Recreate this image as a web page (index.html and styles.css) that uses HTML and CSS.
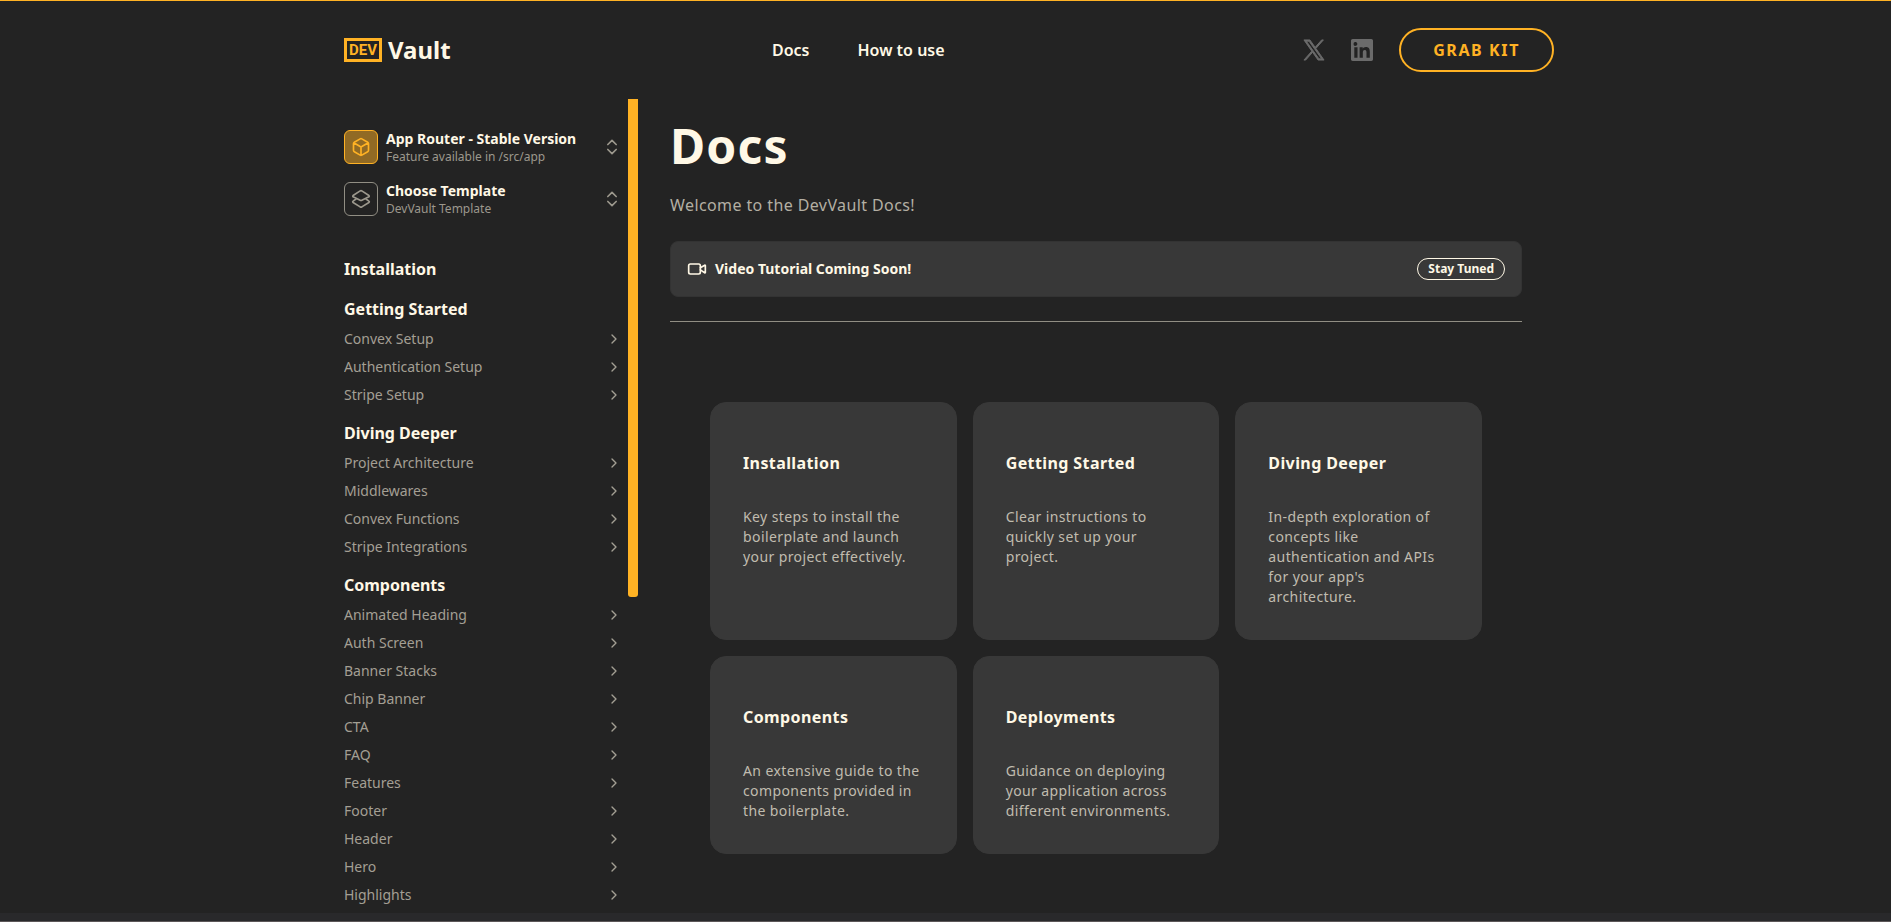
FILE: index.html
```html
<!DOCTYPE html>
<html lang="en">

<head>
  <meta charset="UTF-8" />
  <meta name="viewport" content="width=device-width, initial-scale=1.0" />
  <title>Docs | DevVault</title>
  <link rel="stylesheet" href="styles.css">
</head>

<body>
  <!-- Shared icons -->
  <svg class="sprite" aria-hidden="true">
    <symbol id="chevron-right" viewBox="0 0 24 24">
      <path d="m9 18 6-6-6-6" />
    </symbol>
    <symbol id="chevrons-up-down" viewBox="0 0 24 24">
      <path d="m7 15 5 5 5-5M7 9l5-5 5 5" />
    </symbol>
  </svg>

  <header class="header container">
    <a class="logo" href="#">
      <span class="logo-box">DEV</span>
      <span class="logo-name">Vault</span>
    </a>

    <nav class="nav">
      <a class="nav-link" href="#">Docs</a>
      <a class="nav-link" href="#">How to use</a>
    </nav>

    <div class="header-actions">
      <a class="social" href="#" aria-label="X">
        <svg class="social-icon" viewBox="0 0 24 24">
          <path d="M14.095 10.316 22.286 1h-1.94L13.23 9.088 7.551 1H1l8.59 12.231L1 23h1.94l7.51-8.543L16.45 23H23l-8.905-12.684ZM11.436 13.338l-.872-1.219L3.64 2.432h2.98l5.592 7.821.869 1.219 7.265 10.166h-2.982l-5.928-8.3Z" stroke="currentColor" stroke-width="1" />
        </svg>
      </a>
      <a class="social" href="#" aria-label="LinkedIn">
        <svg class="social-icon" viewBox="0 0 24 24">
          <path fill-rule="evenodd" d="M22.2 0H1.8C.8 0 0 .8 0 1.700v20.500C0 23.200.8 24 1.800 24h20.400c1 0 1.800-.8 1.800-1.800V1.700C24 .8 23.200 0 22.200 0ZM7.100 20.400H3.600V9h3.500v11.400ZM5.300 7.400a2.100 2.100 0 1 1 0-4.100 2.100 2.100 0 0 1 0 4.100ZM20.500 20.400h-3.600v-5.500c0-1.400 0-3-1.800-3-1.900 0-2.200 1.400-2.200 2.900v5.600H9.400V9h3.400v1.600c.5-.9 1.600-1.900 3.400-1.900 3.600 0 4.300 2.400 4.300 5.500v6.200Z" />
        </svg>
      </a>
      <button class="grab-button">GRAB KIT</button>
    </div>
  </header>

  <div class="layout container">
    <aside class="sidebar">
      <div class="sidebar-content">
        <div class="switchers">
          <button class="switcher">
            <span class="switcher-icon switcher-icon-active">
              <svg class="icon-20" viewBox="0 0 24 24">
                <path d="M21 8a2 2 0 0 0-1-1.730l-7-4a2 2 0 0 0-2 0l-7 4A2 2 0 0 0 3 8v8a2 2 0 0 0 1 1.730l7 4a2 2 0 0 0 2 0l7-4A2 2 0 0 0 21 16ZM3.300 7l8.700 5 8.700-5M12 22V12" />
              </svg>
            </span>
            <span class="switcher-text">
              <span class="switcher-title">App Router - Stable Version</span>
              <span class="switcher-sub">Feature available in /src/app</span>
            </span>
            <svg class="icon-20"><use href="#chevrons-up-down" /></svg>
          </button>
          <button class="switcher">
            <span class="switcher-icon">
              <svg class="icon-20" viewBox="0 0 24 24">
                <path d="M2.500 9.300a1 1 0 0 1 0-1.500L11 2.300a2 2 0 0 1 2 0l8.500 5.500a1 1 0 0 1 0 1.500L13 13.500a2 2 0 0 1-2 0ZM6 12l-3.500 2.500a1 1 0 0 0 0 1.700L11 21.500a2 2 0 0 0 2 0l8.500-5.300a1 1 0 0 0 0-1.700L18 12" />
              </svg>
            </span>
            <span class="switcher-text">
              <span class="switcher-title">Choose Template</span>
              <span class="switcher-sub">DevVault Template</span>
            </span>
            <svg class="icon-20"><use href="#chevrons-up-down" /></svg>
          </button>
        </div>

        <nav class="menu">
          <section>
            <h2 class="menu-title">Installation</h2>
          </section>
          <section>
            <h2 class="menu-title">Getting Started</h2>
            <a class="menu-link" href="#">Convex Setup <svg class="icon-16"><use href="#chevron-right" /></svg></a>
            <a class="menu-link" href="#">Authentication Setup <svg class="icon-16"><use href="#chevron-right" /></svg></a>
            <a class="menu-link" href="#">Stripe Setup <svg class="icon-16"><use href="#chevron-right" /></svg></a>
          </section>
          <section>
            <h2 class="menu-title">Diving Deeper</h2>
            <a class="menu-link" href="#">Project Architecture <svg class="icon-16"><use href="#chevron-right" /></svg></a>
            <a class="menu-link" href="#">Middlewares <svg class="icon-16"><use href="#chevron-right" /></svg></a>
            <a class="menu-link" href="#">Convex Functions <svg class="icon-16"><use href="#chevron-right" /></svg></a>
            <a class="menu-link" href="#">Stripe Integrations <svg class="icon-16"><use href="#chevron-right" /></svg></a>
          </section>
          <section>
            <h2 class="menu-title">Components</h2>
            <a class="menu-link" href="#">Animated Heading <svg class="icon-16"><use href="#chevron-right" /></svg></a>
            <a class="menu-link" href="#">Auth Screen <svg class="icon-16"><use href="#chevron-right" /></svg></a>
            <a class="menu-link" href="#">Banner Stacks <svg class="icon-16"><use href="#chevron-right" /></svg></a>
            <a class="menu-link" href="#">Chip Banner <svg class="icon-16"><use href="#chevron-right" /></svg></a>
            <a class="menu-link" href="#">CTA <svg class="icon-16"><use href="#chevron-right" /></svg></a>
            <a class="menu-link" href="#">FAQ <svg class="icon-16"><use href="#chevron-right" /></svg></a>
            <a class="menu-link" href="#">Features <svg class="icon-16"><use href="#chevron-right" /></svg></a>
            <a class="menu-link" href="#">Footer <svg class="icon-16"><use href="#chevron-right" /></svg></a>
            <a class="menu-link" href="#">Header <svg class="icon-16"><use href="#chevron-right" /></svg></a>
            <a class="menu-link" href="#">Hero <svg class="icon-16"><use href="#chevron-right" /></svg></a>
            <a class="menu-link" href="#">Highlights <svg class="icon-16"><use href="#chevron-right" /></svg></a>
          </section>
        </nav>
      </div>
      <div class="scroll-thumb"></div>
    </aside>

    <main class="main">
      <h1 class="page-title">Docs</h1>
      <p class="page-intro">Welcome to the DevVault Docs!</p>

      <div class="banner">
        <svg class="icon-20" viewBox="0 0 24 24">
          <rect x="2" y="6" width="14" height="12" rx="2" />
          <path d="m16 13 5.223 3.482a.5.5 0 0 0 .777-.416V7.870a.5.5 0 0 0-.752-.432L16 10.500" />
        </svg>
        <p class="banner-text">Video Tutorial Coming Soon!</p>
        <span class="badge">Stay Tuned</span>
      </div>

      <hr class="divider">

      <div class="cards">
        <a class="card" href="#">
          <h3 class="card-title">Installation</h3>
          <p class="card-text">Key steps to install the boilerplate and launch your project effectively.</p>
        </a>
        <a class="card" href="#">
          <h3 class="card-title">Getting Started</h3>
          <p class="card-text">Clear instructions to quickly set up your project.</p>
        </a>
        <a class="card" href="#">
          <h3 class="card-title">Diving Deeper</h3>
          <p class="card-text">In-depth exploration of concepts like authentication and APIs for your app's architecture.</p>
        </a>
        <a class="card" href="#">
          <h3 class="card-title">Components</h3>
          <p class="card-text">An extensive guide to the components provided in the boilerplate.</p>
        </a>
        <a class="card" href="#">
          <h3 class="card-title">Deployments</h3>
          <p class="card-text">Guidance on deploying your application across different environments.</p>
        </a>
      </div>
    </main>
  </div>

  <div class="bottom-edge"></div>
</body>

</html>
```

FILE: styles.css
```css
/* Base Reset */
* {
  margin: 0;
  padding: 0;
  box-sizing: border-box;
}

body {
  background-color: #232323;
  border-top: 1px solid #ffb224;
  color: #fff8e6;
  font-family: 'Noto Sans', sans-serif;
  font-size: 16px;
  line-height: 24px;
  height: 100vh;
  display: flex;
  flex-direction: column;
  overflow: hidden;
}

a {
  color: inherit;
  text-decoration: none;
}

button {
  background: none;
  border: none;
  color: inherit;
  font-family: inherit;
  cursor: pointer;
}

.container {
  width: 100%;
  max-width: 1217px;
  margin: 0 auto;
  padding-left: 7px;
}

/* Icons */
.sprite {
  display: none;
}

.icon-16,
.icon-20 {
  width: 16px;
  height: 16px;
  flex-shrink: 0;
  fill: none;
  stroke: currentColor;
  stroke-width: 2;
  stroke-linecap: round;
  stroke-linejoin: round;
}

.icon-20 {
  width: 20px;
  height: 20px;
}

/* Header */
.header {
  display: grid;
  grid-template-columns: 428px 1fr auto;
  align-items: center;
  height: 98px;
  flex-shrink: 0;
}

.logo {
  display: flex;
  align-items: center;
  gap: 6px;
}

.logo-box {
  display: flex;
  align-items: center;
  justify-content: center;
  width: 38px;
  height: 24px;
  border: 3px solid #ffb224;
  color: #ffb224;
  font-family: Roboto, sans-serif;
  font-size: 15px;
  font-weight: 700;
  line-height: 18px;
}

.logo-name {
  font-size: 24px;
  font-weight: 700;
  line-height: 32px;
}

.nav {
  display: flex;
  gap: 48px;
}

.nav-link {
  font-weight: 600;
}

.header-actions {
  display: flex;
  align-items: center;
  gap: 26px;
}

.social {
  display: flex;
  color: #6b6b6b;
}

.social-icon {
  width: 22px;
  height: 22px;
  fill: currentColor;
}

.grab-button {
  height: 44px;
  padding: 0 32px;
  border: 2px solid #ffb224;
  border-radius: 22px;
  color: #ffb224;
  font-size: 16px;
  font-weight: 700;
  letter-spacing: 0.1em;
}

/* Sidebar */
.layout {
  display: flex;
  flex: 1;
  min-height: 0;
}

.sidebar {
  display: flex;
  width: 294px;
  flex-shrink: 0;
  overflow: hidden;
}

.sidebar-content {
  flex: 1;
  padding: 30px 6px 0 0;
}

.scroll-thumb {
  width: 10px;
  height: 498px;
  background-color: #ffb224;
  border-radius: 0 0 3px 3px;
}

.switchers {
  display: flex;
  flex-direction: column;
  gap: 16px;
  margin-bottom: 40px;
}

.switcher {
  display: flex;
  align-items: center;
  gap: 8px;
  color: #9c988d;
  text-align: left;
}

.switcher-icon {
  display: flex;
  align-items: center;
  justify-content: center;
  width: 34px;
  height: 34px;
  border: 1px solid #918e84;
  border-radius: 6px;
}

.switcher-icon-active {
  background-color: #916a24;
  border-color: #ffb224;
  color: #ffb224;
}

.switcher-text {
  display: flex;
  flex-direction: column;
  flex: 1;
}

.switcher-title {
  color: #fff8e6;
  font-size: 14px;
  font-weight: 700;
  line-height: 20px;
}

.switcher-sub {
  font-size: 12px;
  line-height: 16px;
}

.menu {
  display: flex;
  flex-direction: column;
  gap: 12px;
}

.menu-title {
  font-size: 16px;
  font-weight: 700;
  margin-bottom: 4px;
}

.menu-link {
  display: flex;
  align-items: center;
  justify-content: space-between;
  height: 28px;
  color: #a39f94;
  font-size: 14px;
  line-height: 20px;
}

/* Main Content */
.main {
  flex: 1;
  min-width: 0;
  padding: 20px 32px 0;
}

.page-title {
  font-size: 48px;
  font-weight: 700;
  line-height: 54px;
  letter-spacing: 0.025em;
  margin-bottom: 20px;
}

.page-intro {
  color: #b3afa3;
  letter-spacing: 0.025em;
  margin-bottom: 24px;
}

.banner {
  display: flex;
  align-items: center;
  gap: 8px;
  height: 56px;
  padding: 0 16px;
  border: 1px solid #333;
  border-radius: 8px;
  background-color: #383838;
}

.banner-text {
  flex: 1;
  font-size: 14px;
  font-weight: 700;
  line-height: 20px;
}

.badge {
  padding: 2px 10px;
  border: 1px solid #fff8e6;
  border-radius: 11px;
  font-size: 12px;
  font-weight: 700;
  line-height: 16px;
}

.divider {
  border: none;
  height: 1px;
  margin: 24px 0 80px;
  background-color: #918e84;
}

.cards {
  display: grid;
  grid-template-columns: repeat(3, 1fr);
  gap: 16px;
  padding: 0 40px;
  letter-spacing: 0.025em;
}

.card {
  padding: 48px 32px 32px;
  border: 1px solid #383838;
  border-radius: 16px;
  background-color: #383838;
}

.card-title {
  font-size: 16px;
  font-weight: 700;
  margin-bottom: 32px;
}

.card-text {
  color: #c0bcaf;
  font-size: 14px;
  line-height: 20px;
}

/* Lighter strip along the bottom of the window */
.bottom-edge {
  position: fixed;
  left: 0;
  right: 0;
  bottom: 0;
  height: 9px;
  background-color: #29292b;
  border-bottom: 1px solid #5c5758;
}
```
